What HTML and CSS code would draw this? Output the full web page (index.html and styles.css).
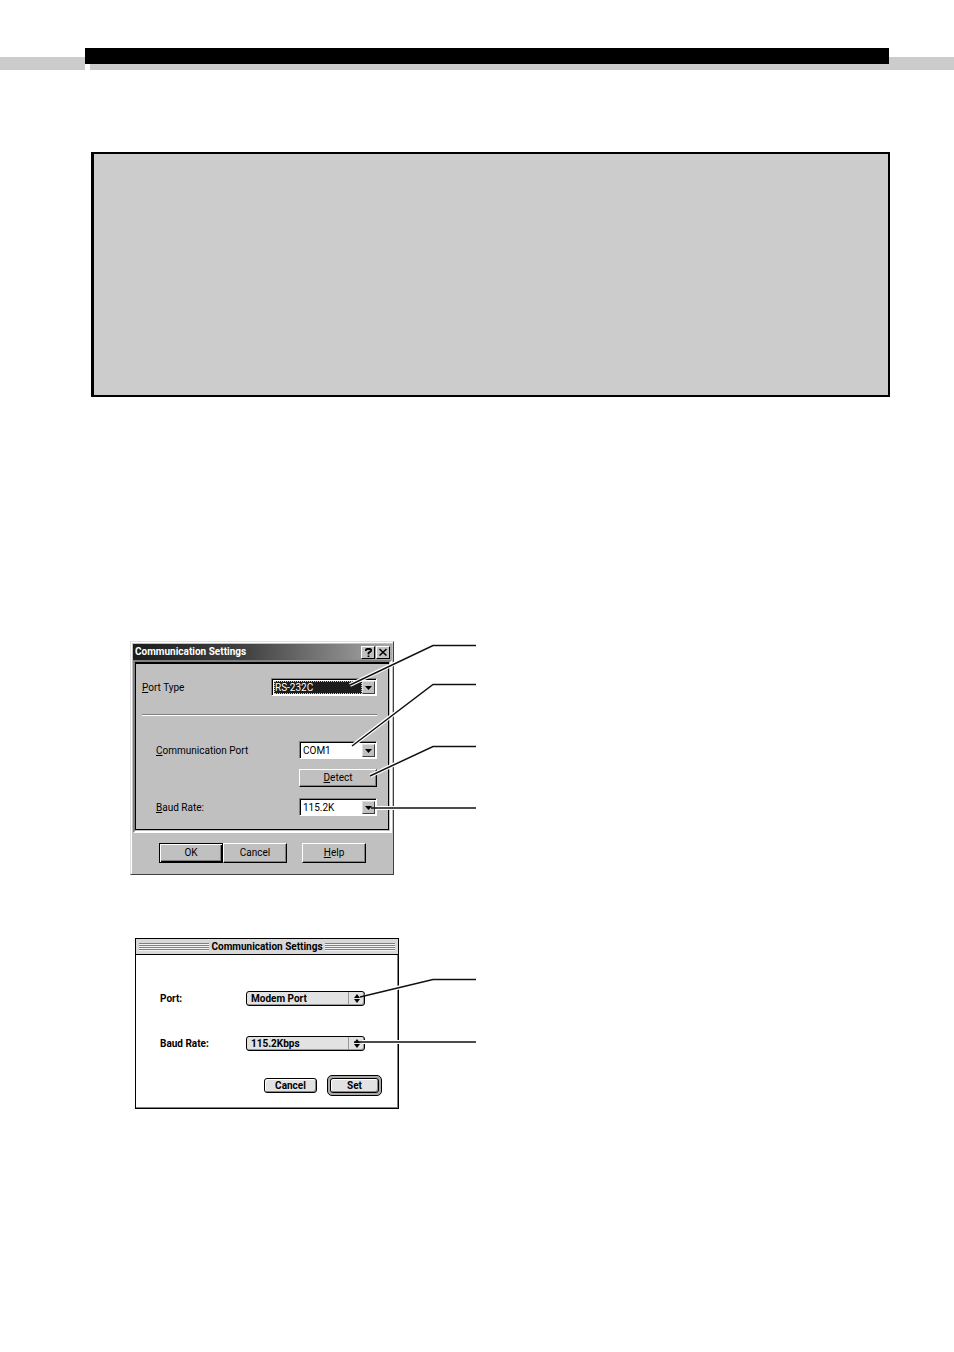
FILE: index.html
```html
<!DOCTYPE html>
<html lang="en">
<head>
  <meta charset="UTF-8" />
  <meta name="viewport" content="width=device-width, initial-scale=1.0"/>
  <title>Communication Settings</title>
  <link rel="stylesheet" href="styles.css">
</head>
<body>

  <header class="page-header">
    <div class="strip strip-left"></div>
    <div class="title-bar">
      <div class="title-black"></div>
      <div class="title-shadow"></div>
    </div>
    <div class="strip strip-right"></div>
  </header>

  <main>
    <section class="note"></section>

    <!-- Windows dialog -->
    <div class="figure figure-win">
      <form class="win">
        <div class="win-title">
          <h2>Communication Settings</h2>
          <button type="button" class="win-icon" aria-label="Help">
            <svg width="7" height="9" viewBox="0 0 7 9"><path d="M1 3V1.5L2 1h3l1 .5V3L3.500 5v1.500M3.500 7.500V9" fill="none" stroke="#000" stroke-width="1.800"/></svg>
          </button>
          <button type="button" class="win-icon" aria-label="Close">
            <svg width="8" height="8" viewBox="0 0 8 8"><path d="M.5 1l7 6.500M7.500 1l-7 6.500" fill="none" stroke="#000" stroke-width="1.500"/></svg>
          </button>
        </div>

        <div class="win-frame">
          <div class="win-panel">
            <div class="win-row">
              <label for="portType"><u>P</u>ort Type</label>
              <div class="win-select wide">
                <select id="portType" class="selected"><option>RS-232C</option></select>
                <span class="win-arrow"><svg width="7" height="4" viewBox="0 0 7 4"><path d="M0 0h7L3.500 4z"/></svg></span>
              </div>
            </div>
            <hr>
            <div class="win-row indent">
              <label for="comPort"><u>C</u>ommunication Port</label>
              <div class="win-select">
                <select id="comPort"><option>COM1</option></select>
                <span class="win-arrow"><svg width="7" height="4" viewBox="0 0 7 4"><path d="M0 0h7L3.500 4z"/></svg></span>
              </div>
            </div>
            <div class="win-row detect">
              <button type="button" class="win-btn"><span><u>D</u>etect</span></button>
            </div>
            <div class="win-row indent">
              <label for="winBaud"><u>B</u>aud Rate:</label>
              <div class="win-select">
                <select id="winBaud"><option>115.2K</option></select>
                <span class="win-arrow"><svg width="7" height="4" viewBox="0 0 7 4"><path d="M0 0h7L3.500 4z"/></svg></span>
              </div>
            </div>
          </div>
        </div>

        <div class="win-buttons">
          <button type="button" class="win-btn default">OK</button>
          <button type="button" class="win-btn">Cancel</button>
          <button type="button" class="win-btn help"><span><u>H</u>elp</span></button>
        </div>
      </form>
      <svg class="callouts" width="346" height="234" viewBox="0 0 346 234">
        <g class="halo">
          <path d="M220 44L303 4"/>
          <path d="M222 105L303 43"/>
          <path d="M240 135L303 105"/>
          <path d="M246 167H303"/>
        </g>
        <g class="line">
          <path d="M220 44L303 4.500H346"/>
          <path d="M222 105L303 43.500H346"/>
          <path d="M240 135L303 105.500H346"/>
          <path d="M241 167H346"/>
        </g>
      </svg>
    </div>

    <!-- Macintosh dialog -->
    <div class="figure figure-mac">
      <form class="mac">
        <div class="mac-title">
          <span class="stripes"></span>
          <h2>Communication Settings</h2>
          <span class="stripes"></span>
        </div>
        <div class="mac-body">
          <div class="mac-row">
            <label for="macPort">Port:</label>
            <div class="mac-select">
              <select id="macPort"><option>Modem Port</option></select>
              <span class="mac-arrow"><svg width="6" height="9" viewBox="0 0 6 9"><path d="M0 4L3 0l3 4zM0 5h6L3 9z"/></svg></span>
            </div>
          </div>
          <div class="mac-row">
            <label for="macBaud">Baud Rate:</label>
            <div class="mac-select">
              <select id="macBaud"><option>115.2Kbps</option></select>
              <span class="mac-arrow"><svg width="6" height="9" viewBox="0 0 6 9"><path d="M0 4L3 0l3 4zM0 5h6L3 9z"/></svg></span>
            </div>
          </div>
          <div class="mac-buttons">
            <button type="button" class="mac-btn">Cancel</button>
            <div class="mac-ring"><button type="button" class="mac-btn">Set</button></div>
          </div>
        </div>
      </form>
      <svg class="callouts" width="341" height="171" viewBox="0 0 341 171">
        <g class="halo">
          <path d="M230 58L298 41"/>
          <path d="M227 104H298"/>
        </g>
        <g class="line">
          <path d="M225 59L298 41.500H341"/>
          <path d="M219 104H341"/>
        </g>
      </svg>
    </div>
  </main>

</body>
</html>
```
FILE: styles.css
```css
* { margin: 0; padding: 0; box-sizing: border-box; }
body { font-family: Roboto, Arial, sans-serif; background: #fff; color: #000; }

button, select { font: inherit; color: inherit; }

/* --- Page header --- */
.page-header {
  display: flex;
  padding-top: 48px;
}

.strip {
  height: 13px;
  margin-top: 9px;
  background: #ccc;
}

.strip-left { width: 85px; }
.strip-right { width: 65px; }

.title-bar { flex: 1; }

.title-black {
  height: 16px;
  background: #000;
}

.title-shadow {
  height: 6px;
  margin-left: 5px;
  background: #ccc;
}

.note {
  min-height: 245px;
  margin: 82px 64px 0 91px;
  background: #ccc;
  border: 2px solid #000;
  border-left-width: 3px;
}

/* --- Figures with callout lines --- */
.figure {
  position: relative;
  width: fit-content;
}

.figure-win { margin: 244px 0 0 130px; }
.figure-mac { margin: 63px 0 0 135px; }

.callouts {
  position: absolute;
  left: 0;
  top: 0;
  pointer-events: none;
}

.halo path { fill: none; stroke: #fff; stroke-width: 4; }
.line path { fill: none; stroke: #111; stroke-width: 1.5; }

/* --- Windows dialog --- */
.win {
  width: 264px;
  background: #c0c0c0;
  border: 1px solid;
  border-color: #dfdfdf #404040 #404040 #dfdfdf;
  box-shadow: inset 1px 1px #fff;
  padding: 2px 1px 11px 2px;
  font-size: 10px;
  line-height: 14px;
}

.win-title {
  display: flex;
  align-items: center;
  height: 16px;
  padding: 0 2px;
  background: linear-gradient(to right, #1c1c1c, #444 45%, #aaa);
  color: #fff;
}

.win-title h2 {
  flex: 1;
  font-size: 10px;
}

.win-icon {
  display: flex;
  align-items: center;
  justify-content: center;
  width: 14px;
  height: 13px;
  margin-left: 1px;
  background: #c0c0c0;
  border: 1px solid;
  border-color: #fff #000 #000 #fff;
}

.win-frame {
  border: 2px solid;
  border-color: #808080 #fff #fff #808080;
  padding: 0 1px 1px 0;
}

.win-panel {
  border: 1px solid #000;
  border-top-width: 2px;
  padding: 14px 11px 13px 6px;
}

.win-row {
  display: flex;
  align-items: center;
  justify-content: space-between;
}

.win-row label { padding-top: 2px; }

.win-row.indent { padding-left: 14px; }

.win-panel hr {
  border: 0;
  border-top: 1px solid #808080;
  border-bottom: 1px solid #fff;
  margin: 18px 0 25px;
}

.win-select {
  display: flex;
  width: 78px;
  height: 18px;
  background: #fff;
  border: 1px solid;
  border-color: #808080 #fff #fff #808080;
  box-shadow: inset 1px 1px #000;
  padding: 2px 1px 1px 2px;
}

.win-select.wide { width: 106px; }

.win-select select {
  flex: 1;
  min-width: 0;
  appearance: none;
  background: #fff;
  border: 0;
  padding-left: 1px;
}

.win-select .selected {
  background: #1c1c1c;
  color: #fff;
  border: 1px dotted #ccc;
  line-height: 11px;
  padding-left: 0;
}

.win-arrow {
  display: flex;
  align-items: center;
  justify-content: center;
  width: 13px;
  background: #c0c0c0;
  border: 1px solid;
  border-color: #dfdfdf #404040 #404040 #dfdfdf;
}

.win-row.detect {
  justify-content: flex-end;
  padding: 10px 0 11px;
}

.win-btn {
  width: 64px;
  height: 20px;
  background: #c0c0c0;
  border: 1px solid;
  border-color: #fff #000 #000 #fff;
  box-shadow: inset -1px -1px #808080;
}

.detect .win-btn {
  width: 78px;
  height: 18px;
}

.win-btn.default {
  border-color: #000;
  box-shadow: inset 1px 1px #fff, inset -1px -1px #000, inset -2px -2px #808080;
}

.win-buttons {
  display: flex;
  padding: 10px 0 0 26px;
}

.win-buttons .help { margin-left: 15px; }

/* --- Macintosh dialog --- */
.mac {
  width: 264px;
  background: #fff;
  border: 1px solid #000;
  box-shadow: inset -1px -1px #808080;
  font-size: 10px;
  font-weight: bold;
  line-height: 13px;
}

.mac-title {
  display: flex;
  align-items: center;
  gap: 2px;
  height: 16px;
  padding: 0 3px;
  background: #d8d8d8;
  border-bottom: 1px solid #000;
}

.mac-title h2 { font-size: 10px; }

.stripes {
  flex: 1;
  height: 8px;
  background: repeating-linear-gradient(#808080 0 1px, #f4f4f4 1px 2px);
}

.mac-body { padding: 36px 16px 12px 24px; }

.mac-row {
  display: flex;
  align-items: center;
  margin-bottom: 30px;
}

.mac-row label { width: 86px; }

.mac-select {
  display: flex;
  width: 119px;
  height: 15px;
  background: #e2e2e2;
  border: 1px solid #000;
  border-radius: 3px;
  box-shadow: inset -1px -1px #999;
}

.mac-select select {
  flex: 1;
  min-width: 0;
  appearance: none;
  background: none;
  border: 0;
  padding-left: 4px;
}

.mac-arrow {
  display: flex;
  align-items: center;
  justify-content: center;
  width: 16px;
  border-left: 1px solid #999;
}

.mac-buttons {
  display: flex;
  align-items: center;
  justify-content: flex-end;
  gap: 10px;
  margin-top: -6px;
}

.mac-btn {
  width: 53px;
  height: 15px;
  background: #e2e2e2;
  border: 1px solid #000;
  border-radius: 3px;
  box-shadow: inset 1px 1px #fff, inset -1px -1px #888;
}

.mac-ring {
  display: flex;
  padding: 2px;
  background: #aaa;
  border: 1px solid #000;
  border-radius: 5px;
}

.mac-ring .mac-btn { width: 49px; }
```
